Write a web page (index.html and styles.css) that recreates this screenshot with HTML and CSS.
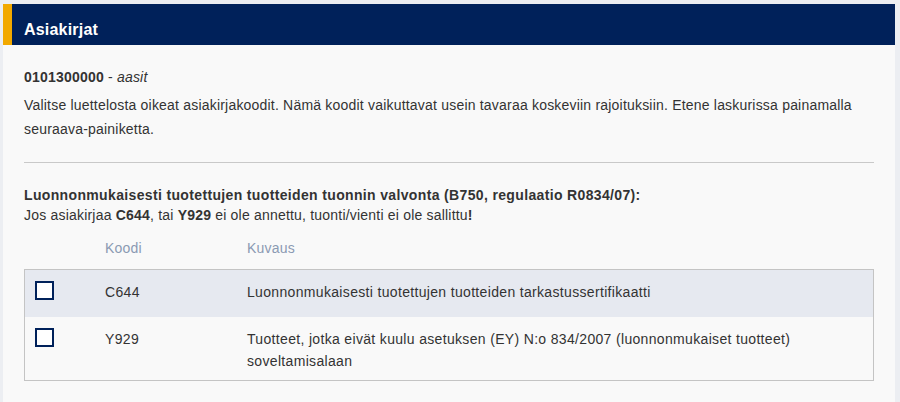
FILE: index.html
```html
<!DOCTYPE html>
<html>
<head>
   <title>Asiakirjat</title>
   <link rel="stylesheet" href="styles.css">
</head>
<body>
   <div class="panel">
       <div class="panel-header">
           <h2 class="panel-title">Asiakirjat</h2>
       </div>

       <div class="panel-body">
           <p class="product"><strong>0101300000</strong> - <em>aasit</em></p>
           <p class="intro">Valitse luettelosta oikeat asiakirjakoodit. Nämä koodit vaikuttavat usein tavaraa koskeviin rajoituksiin. Etene laskurissa painamalla seuraava-painiketta.</p>

           <hr class="divider">

           <div class="group">
               <p class="group-title">Luonnonmukaisesti tuotettujen tuotteiden tuonnin valvonta (B750, regulaatio R0834/07):</p>
               <p class="group-note">Jos asiakirjaa <strong>C644</strong>, tai <strong>Y929</strong> ei ole annettu, tuonti/vienti ei ole sallittu<strong>!</strong></p>

               <div class="doc-head">
                   <span></span>
                   <span>Koodi</span>
                   <span>Kuvaus</span>
               </div>

               <div class="doc-table">
                   <label class="doc-row doc-row-alt">
                       <span class="check"></span>
                       <span class="code">C644</span>
                       <span class="desc">Luonnonmukaisesti tuotettujen tuotteiden tarkastussertifikaatti</span>
                   </label>
                   <label class="doc-row">
                       <span class="check"></span>
                       <span class="code">Y929</span>
                       <span class="desc">Tuotteet, jotka eivät kuulu asetuksen (EY) N:o 834/2007 (luonnonmukaiset tuotteet) soveltamisalaan</span>
                   </label>
               </div>
           </div>
       </div>
   </div>
</body>
</html>
```

FILE: styles.css
```css
* {
    margin: 0;
    padding: 0;
    box-sizing: border-box;
}

body {
    font-family: 'Liberation Sans', Arial, sans-serif;
    font-size: 14px;
    letter-spacing: 0.2px;
    background: #eceef2;
    color: #333333;
    padding: 4px 5px 0 3px;
}

.panel {
    background: #f9f9f9;
    min-height: calc(100vh - 4px);
}

.panel-header {
    background: #00215a;
    border-left: 9px solid #f2a900;
    padding: 16px 12px 5px;
    height: 41px;
}

.panel-title {
    color: #ffffff;
    font-size: 16px;
    font-weight: 700;
    line-height: 20px;
}

.panel-body {
    padding: 22px 21px 0;
}

.product {
    line-height: 20px;
}

.intro {
    margin-top: 6px;
    line-height: 24px;
}

.divider {
    border: none;
    border-top: 1px solid #c9c9c9;
    margin: 21px 0 22px;
}

.group-title {
    font-weight: 700;
    letter-spacing: 0.35px;
    line-height: 20px;
}

.group-note {
    line-height: 20px;
}

.doc-head,
.doc-row {
    display: grid;
    grid-template-columns: 80px 142px 1fr;
}

.doc-head {
    margin: 13px 0 11px;
    padding-left: 1px;
    color: #8b9ab3;
    line-height: 20px;
}

.doc-table {
    border: 1px solid #c4c4c4;
    background: #f9f9f9;
}

.doc-row {
    min-height: 47px;
    padding: 11px 0 8px 10px;
    line-height: 22px;
    letter-spacing: 0.33px;
    cursor: pointer;
}

.doc-row + .doc-row {
    min-height: 0;
}

.doc-row-alt {
    background: #e6e9f0;
}

.doc-row .code {
    margin-left: -10px;
}

.doc-row .desc {
    margin-left: -10px;
    padding-right: 60px;
}

.check {
    display: block;
    width: 19px;
    height: 19px;
    border: 2px solid #00215a;
    background: #ffffff;
}
```
